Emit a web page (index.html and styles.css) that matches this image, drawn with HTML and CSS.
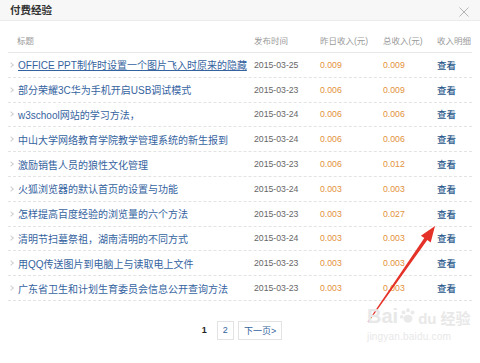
FILE: index.html
```html
<!DOCTYPE html>
<html lang="zh-CN">
<head>
    <meta charset="UTF-8">
    <meta name="viewport" content="width=device-width, initial-scale=1.0">
    <title>付费经验</title>
    <link rel="stylesheet" href="styles.css">
</head>
<body>
    <div class="dialog">
        <!-- Title bar -->
        <div class="dialog-head">
            <h2 class="dialog-title">付费经验</h2>
            <svg class="dialog-close" viewBox="0 0 10 10">
                <path d="M0.5,0.5 L9.5,9.5 M9.5,0.5 L0.5,9.5" stroke="#b5b5b5" stroke-width="1" fill="none"/>
            </svg>
        </div>

        <div class="dialog-body">
            <div class="exp-row exp-row-head">
                <span class="head-title">标题</span>
                <span>发布时间</span>
                <span>昨日收入(元)</span>
                <span>总收入(元)</span>
                <span>收入明细</span>
            </div>

            <div class="exp-row">
                <span class="col-title"><i class="chev"></i><a class="exp-link is-hover" href="#">OFFICE PPT制作时设置一个图片飞入时原来的隐藏</a></span>
                <span class="col-date">2015-03-25</span>
                <span class="col-num">0.009</span>
                <span class="col-num">0.009</span>
                <a class="col-view" href="#">查看</a>
            </div>
            <div class="exp-row">
                <span class="col-title"><i class="chev"></i><a class="exp-link" href="#">部分荣耀3C华为手机开启USB调试模式</a></span>
                <span class="col-date">2015-03-23</span>
                <span class="col-num">0.006</span>
                <span class="col-num">0.009</span>
                <a class="col-view" href="#">查看</a>
            </div>
            <div class="exp-row">
                <span class="col-title"><i class="chev"></i><a class="exp-link" href="#">w3school网站的学习方法，</a></span>
                <span class="col-date">2015-03-24</span>
                <span class="col-num">0.006</span>
                <span class="col-num">0.006</span>
                <a class="col-view" href="#">查看</a>
            </div>
            <div class="exp-row">
                <span class="col-title"><i class="chev"></i><a class="exp-link" href="#">中山大学网络教育学院教学管理系统的新生报到</a></span>
                <span class="col-date">2015-03-24</span>
                <span class="col-num">0.006</span>
                <span class="col-num">0.006</span>
                <a class="col-view" href="#">查看</a>
            </div>
            <div class="exp-row">
                <span class="col-title"><i class="chev"></i><a class="exp-link" href="#">激励销售人员的狼性文化管理</a></span>
                <span class="col-date">2015-03-23</span>
                <span class="col-num">0.006</span>
                <span class="col-num">0.012</span>
                <a class="col-view" href="#">查看</a>
            </div>
            <div class="exp-row">
                <span class="col-title"><i class="chev"></i><a class="exp-link" href="#">火狐浏览器的默认首页的设置与功能</a></span>
                <span class="col-date">2015-03-24</span>
                <span class="col-num">0.003</span>
                <span class="col-num">0.003</span>
                <a class="col-view" href="#">查看</a>
            </div>
            <div class="exp-row">
                <span class="col-title"><i class="chev"></i><a class="exp-link" href="#">怎样提高百度经验的浏览量的六个方法</a></span>
                <span class="col-date">2015-03-23</span>
                <span class="col-num">0.003</span>
                <span class="col-num">0.027</span>
                <a class="col-view" href="#">查看</a>
            </div>
            <div class="exp-row">
                <span class="col-title"><i class="chev"></i><a class="exp-link" href="#">清明节扫墓祭祖，湖南清明的不同方式</a></span>
                <span class="col-date">2015-03-24</span>
                <span class="col-num">0.003</span>
                <span class="col-num">0.003</span>
                <a class="col-view" href="#">查看</a>
            </div>
            <div class="exp-row">
                <span class="col-title"><i class="chev"></i><a class="exp-link" href="#">用QQ传送图片到电脑上与读取电上文件</a></span>
                <span class="col-date">2015-03-23</span>
                <span class="col-num">0.003</span>
                <span class="col-num">0.003</span>
                <a class="col-view" href="#">查看</a>
            </div>
            <div class="exp-row">
                <span class="col-title"><i class="chev"></i><a class="exp-link" href="#">广东省卫生和计划生育委员会信息公开查询方法</a></span>
                <span class="col-date">2015-03-23</span>
                <span class="col-num">0.003</span>
                <span class="col-num">0.003</span>
                <a class="col-view" href="#">查看</a>
            </div>

            <!-- Pager -->
            <div class="pager">
                <span class="pager-current">1</span>
                <a class="pager-btn" href="#">2</a>
                <a class="pager-btn" href="#">下一页&gt;</a>
            </div>
        </div>

        <!-- Red annotation arrow -->
        <svg class="mark-arrow" viewBox="0 0 480 363">
            <polygon fill="#e53228" points="435,226 430.7,242.5 427.3,240.1 368.4,322.3 367.6,321.7 424.3,238.1 420.9,235.7"/>
        </svg>

        <!-- Watermark -->
        <div class="watermark">
            <div class="wm-logo">
                <span>Bai</span>
                <svg class="wm-paw" viewBox="0 0 20 20">
                    <circle cx="5" cy="6" r="2.2"/>
                    <circle cx="10" cy="3.5" r="2.2"/>
                    <circle cx="15" cy="6" r="2.2"/>
                    <circle cx="3" cy="11" r="2"/>
                    <ellipse cx="10" cy="13" rx="5" ry="4.5"/>
                </svg>
                <span class="wm-du">du</span>
                <span class="wm-cn">经验</span>
            </div>
            <div class="wm-url">jingyan.baidu.com</div>
        </div>
    </div>
</body>
</html>
```

FILE: styles.css
```css
body {
    margin: 0;
    background: #fff;
    font-family: "Liberation Sans", "Noto Sans CJK SC", sans-serif;
}

.dialog {
    width: 480px;
    height: 363px;
    position: relative;
    overflow: hidden;
}

.dialog-head {
    height: 20px;
    background: #f7f7f7;
    border-bottom: 1px solid #ebebeb;
    display: flex;
    align-items: center;
    justify-content: space-between;
    padding: 0 11px 0 10px;
}

.dialog-title {
    margin: 0;
    font-size: 10.5px;
    font-weight: bold;
    color: #333;
    line-height: 1;
}

.dialog-close {
    width: 10px;
    height: 10px;
    margin-top: 3px;
}

.dialog-body {
    padding: 7px 8px 0;
}

.exp-row {
    display: grid;
    grid-template-columns: 242px 66px 63px 54px 1fr;
    align-items: center;
    height: 24.8px;
    box-sizing: border-box;
    border-bottom: 1px dashed #e3e3e3;
    font-size: 8.7px;
}

.exp-row > span,
.exp-row > a {
    padding-left: 4px;
    white-space: nowrap;
}

.exp-row-head {
    height: 25px;
    border-bottom: 1px solid #e8e8e8;
    color: #9a9a9a;
    font-size: 8.5px;
}

.exp-row > .head-title {
    padding-left: 9px;
}

.exp-row > .col-title {
    display: flex;
    align-items: center;
    padding-left: 0;
}

.chev {
    width: 3px;
    height: 3px;
    border-top: 1px solid #cfcfcf;
    border-right: 1px solid #cfcfcf;
    transform: rotate(45deg);
    margin: 0 5px 0 1px;
}

.exp-link {
    font-size: 10px;
    color: #3563a0;
    text-decoration: none;
}

.exp-link.is-hover {
    text-decoration: underline;
}

.col-date {
    color: #666;
}

.col-num {
    color: #e2913a;
}

.col-view {
    color: #2b5a8c;
    font-size: 9.5px;
    font-weight: 500;
    text-decoration: none;
}

.pager {
    display: flex;
    justify-content: center;
    align-items: center;
    gap: 4px;
    margin-top: 20px;
    font-size: 9px;
    padding-left: 4px;
}

.pager-current {
    font-weight: bold;
    color: #222;
    margin-right: 6px;
}

.pager-btn {
    height: 19px;
    box-sizing: border-box;
    padding: 0 5px;
    border: 1px solid #e3e3e3;
    color: #33649c;
    text-decoration: none;
    display: flex;
    align-items: center;
}

.mark-arrow {
    position: absolute;
    left: 0;
    top: 0;
    width: 480px;
    height: 363px;
    pointer-events: none;
}

.watermark {
    position: absolute;
    left: 367px;
    top: 306px;
    color: #e8e8e8;
    pointer-events: none;
}

.wm-logo {
    display: flex;
    align-items: flex-end;
    font-size: 20px;
    font-weight: bold;
    line-height: 1;
}

.wm-paw {
    width: 18px;
    height: 20px;
    fill: #eaeaea;
    margin: 0 1px;
}

.wm-du {
    font-size: 15px;
}

.wm-cn {
    margin-left: 4px;
    font-size: 15px;
}

.wm-url {
    font-size: 10px;
    margin-top: 5px;
    letter-spacing: 0.2px;
}
```
